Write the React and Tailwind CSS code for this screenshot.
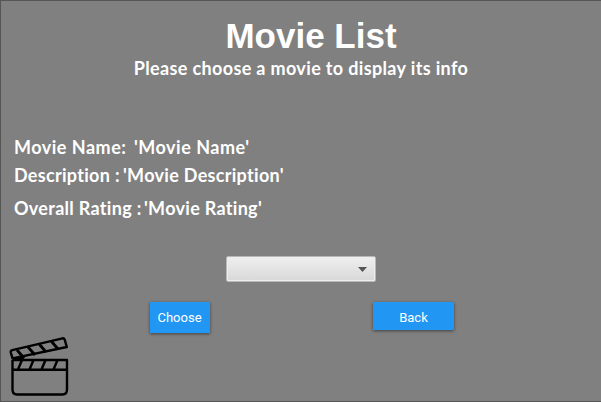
const rows = [
  { label: 'Movie Name:', value: "'Movie Name'", row: 'h-7', col: 'w-[120px]', track: 'tracking-[0.5px]' },
  { label: 'Description :', value: "'Movie Description'", row: 'h-7', col: 'w-[109px]', track: 'tracking-[0.3px]' },
  { label: 'Overall Rating :', value: "'Movie Rating'", row: 'h-7 mt-[5px]', col: 'w-[130px]', track: 'tracking-[0.3px]' },
];

function Clapperboard() {
  return (
    <svg width="60" height="61" viewBox="0 0 60 61" fill="none" stroke="#000" strokeWidth="2.4" strokeLinejoin="round">
      <path d="M3.500 24V53.500Q3.500 58.500 8 58.500H53.500Q58 58.500 58 53.500V24H3.500" />
      <path d="M3.500 33.700H58M13 24L9 33.500M24.500 24L20.500 33.500M36.500 24L32.500 33.500M48.500 24L44.500 33.500" />
      <path d="M3.500 22.300L1.800 16.500Q1.300 14.600 3.300 14.200L53.500 2.300Q55 2 55.700 3.700L57.800 11L3.500 22.300Z" />
      <path d="M8 14L14 21M19 11L26 19M30.500 8.500L37 16M42.500 5.500L49 13" strokeWidth="2.800" />
      <path d="M4 22V25H13L17 20Z" fill="#000" stroke="none" />
    </svg>
  );
}

export default function App() {
  return (
    <main className="flex h-[402px] w-[601px] flex-col overflow-hidden border-b border-l border-t border-[#555] bg-[#808080] font-['Lato',sans-serif] text-white">
      <h1 className="ml-5 mt-[15px] h-10 text-center font-['Liberation_Sans',sans-serif] text-[35px] font-bold leading-10">Movie List</h1>
      <p className="h-6 whitespace-nowrap text-center text-[18px] font-bold leading-6 tracking-[0.35px]">Please choose a movie to display its info</p>
      <dl className="ml-[13px] mt-[53px] text-[18px] font-bold leading-7">
        {rows.map((r) => (
          <div key={r.label} className={`flex whitespace-nowrap ${r.row} ${r.track}`}>
            <dt className={`shrink-0 ${r.col}`}>{r.label}</dt>
            <dd>{r.value}</dd>
          </div>
        ))}
      </dl>
      <button aria-label="Movie" className="ml-[225px] mt-[34px] flex h-[26px] w-[150px] shrink-0 items-center justify-end rounded-[2px] border border-[#b8b8b8] bg-linear-to-b from-[#efefef] to-[#d8d8d8] pr-2 shadow-[inset_0_0_0_1px_#eeeeee]">
        <svg width="9" height="5" viewBox="0 0 9 5"><path d="M0 0H9L4.500 5Z" fill="#555" /></svg>
      </button>
      <div className="ml-[149px] mt-5 flex shrink-0 items-start gap-[163px] font-['Roboto',sans-serif] text-[13px]">
        <button className="h-[31px] w-[60px] bg-[#2196f3] pr-px shadow-[0_1px_3px_rgba(0,0,0,0.5)]">Choose</button>
        <button className="h-[28px] w-[81px] bg-[#2196f3] pt-[3px] shadow-[0_1px_3px_rgba(0,0,0,0.5)]">Back</button>
      </div>
      <div className="ml-[8px] mt-[3px]"><Clapperboard /></div>
    </main>
  );
}
